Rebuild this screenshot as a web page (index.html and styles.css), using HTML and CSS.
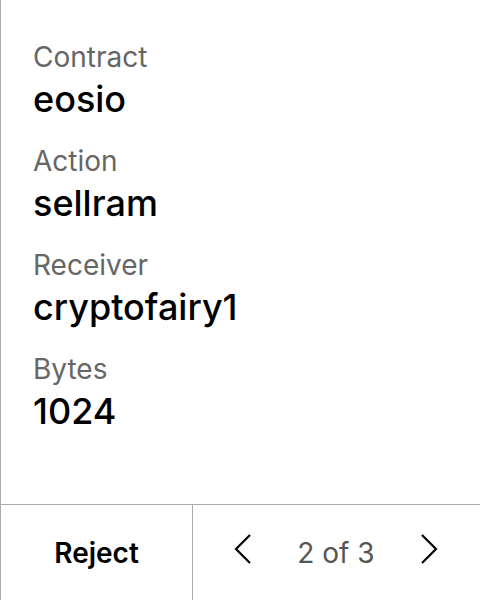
FILE: index.html
```html
<!DOCTYPE html>
<html>
<head>
<meta charset="utf-8">
<link rel="stylesheet" href="styles.css">
</head>
<body>
<div class="screen">
  <div class="fields">
    <div class="field">
      <div class="label">Contract</div>
      <div class="value">eosio</div>
    </div>
    <div class="field">
      <div class="label">Action</div>
      <div class="value">sellram</div>
    </div>
    <div class="field">
      <div class="label">Receiver</div>
      <div class="value">cryptofairy1</div>
    </div>
    <div class="field">
      <div class="label">Bytes</div>
      <div class="value">1024</div>
    </div>
  </div>
  <div class="footer">
    <div class="reject">Reject</div>
    <div class="pager">
      <svg class="chev" width="20" height="32" viewBox="0 0 20 32"><path d="M17 2 L3 16 L17 30" fill="none" stroke="#000" stroke-width="2.2"/></svg>
      <span class="count">2 of 3</span>
      <svg class="chev" width="20" height="32" viewBox="0 0 20 32"><path d="M3 2 L17 16 L3 30" fill="none" stroke="#000" stroke-width="2.2"/></svg>
    </div>
  </div>
</div>
</body>
</html>
```
FILE: styles.css
```css
html, body {
  margin: 0;
  padding: 0;
  background: #fff;
}
body {
  font-family: Inter, "Noto Sans", sans-serif;
}
.screen {
  width: 480px;
  height: 600px;
  box-sizing: border-box;
  border-left: 1px solid #aaa;
  display: flex;
  flex-direction: column;
}
.fields {
  flex: 1;
  padding: 39px 0 0 32px;
  display: flex;
  flex-direction: column;
  gap: 20px;
}
.field {
  display: flex;
  flex-direction: column;
}
.label {
  font-size: 28px;
  line-height: 36px;
  color: #666;
}
.value {
  font-size: 36px;
  line-height: 48px;
  color: #000;
  font-weight: 450;
}
.footer {
  height: 95px;
  border-top: 1px solid #aaa;
  display: flex;
}
.reject {
  width: 191px;
  border-right: 1px solid #aaa;
  display: flex;
  align-items: center;
  justify-content: center;
  font-size: 28px;
  font-weight: 600;
  color: #000;
}
.pager {
  flex: 1;
  display: flex;
  align-items: center;
  justify-content: space-between;
  padding: 0 41px 0 40px;
}
.count {
  font-size: 28px;
  color: #555;
}
.chev {
  display: block;
  margin-bottom: 8px;
}
```
